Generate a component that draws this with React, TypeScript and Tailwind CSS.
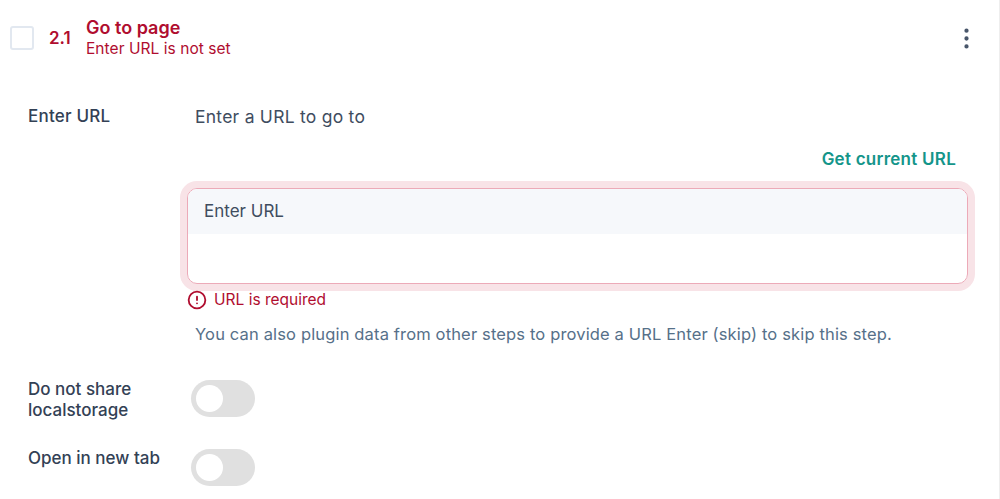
import { AlertCircle, MoreVertical } from "lucide-react";

function Toggle() {
  return (
    <div className="w-[64px] h-[37px] rounded-full bg-[#e0e0e0] p-[5px] shrink-0">
      <div className="w-[27px] h-[27px] rounded-full bg-white" />
    </div>
  );
}

export default function App() {
  return (
    <div className="w-[1000px] h-[499px] bg-white overflow-hidden border-r border-[#eeeeee] font-['Inter',sans-serif] text-[#334155]">
      <div className="flex items-start h-[88px] pl-[10px] pr-[20px] pt-[17px]">
        <div className="w-[24px] h-[24px] mt-[9px] rounded-[3px] border-[2px] border-[#e2e8f0] shrink-0" />
        <div className="ml-[15px] mt-[10px] w-[37px] text-[17px] leading-[22px] font-semibold text-[#b00d2f]">2.1</div>
        <div className="text-[#b00d2f]">
          <div className="text-[18px] leading-[22px] font-semibold">Go to page</div>
          <div className="text-[15.5px] leading-[19px] tracking-[0.05px]">Enter URL is not set</div>
        </div>
        <MoreVertical className="ml-auto mt-[7.5px] mr-[-1px] w-[27px] h-[27px] text-[#475569]" strokeWidth={1.8} />
      </div>

      <div className="flex pl-[28px] pr-[30px]">
        <div className="w-[159px] shrink-0 pt-[18px] text-[17px] leading-[20px] font-medium tracking-[0.2px] text-[#334155]">Enter URL</div>
        <div className="flex-1 min-w-0">
          <div className="pl-[8px] pt-[18px] text-[17.5px] leading-[22px] tracking-[0.25px] text-[#3f4d5f]">Enter a URL to go to</div>
          <div className="mt-[20px] mr-[13px] text-right text-[17px] leading-[22px] font-semibold tracking-[0.25px] text-[#14958a]">Get current URL</div>
          <div className="mt-[18px] w-[781px] h-[96px] rounded-[10px] border-[1.5px] border-[#ecaab8] ring-[7px] ring-[#f8e3e7] overflow-hidden">
            <div className="h-[45px] bg-[#f6f8fb] pl-[16px] pt-[11px] text-[17px] leading-[22px] text-[#3f4d5f]">Enter URL</div>
          </div>
          <div className="mt-[6px] flex items-center gap-[7px] text-[#b00d2f] text-[15.5px] leading-[20px]">
            <AlertCircle className="w-[20px] h-[20px]" strokeWidth={2.2} />
            URL is required
          </div>
          <div className="mt-[13px] pl-[8px] text-[16.5px] leading-[22px] tracking-[0.15px] text-[#567089] whitespace-nowrap">
            You can also plugin data from other steps to provide a URL Enter (skip) to skip this step.
          </div>
        </div>
      </div>

      <div className="flex pl-[28px] mt-[35px]">
        <div className="w-[163px] shrink-0 -mt-[1px] text-[17px] leading-[21px] font-medium text-[#334155]">Do not share<br />localstorage</div>
        <Toggle />
      </div>
      <div className="flex pl-[28px] mt-[28px]">
        <div className="w-[163px] shrink-0 -mt-[1px] text-[17px] leading-[21px] font-medium text-[#334155]">Open in new tab</div>
        <Toggle />
      </div>
    </div>
  );
}
